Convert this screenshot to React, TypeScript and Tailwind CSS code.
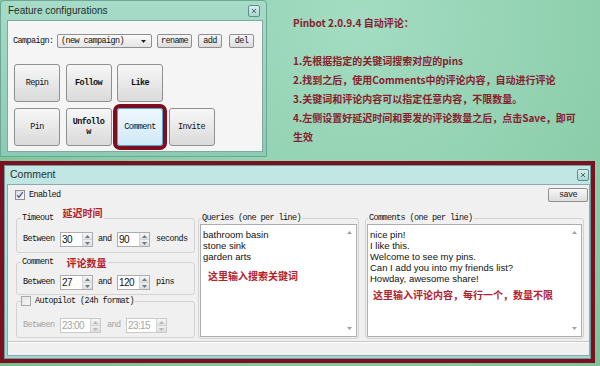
import clsx from 'clsx';

const mono = "font-['Liberation_Mono',monospace] text-[8.5px] tracking-[-0.6px]";
const sans = "font-['Liberation_Sans',Arial,sans-serif]";
const cjk = "font-['Noto_Sans_CJK_SC',sans-serif]";

function CloseBox() {
  return (
    <div className="flex h-[12px] w-[12px] items-center justify-center rounded-[2px] border border-[#5f8f8a] bg-linear-to-b from-[#d8efec] to-[#a9d6d1]">
      <svg width="6" height="6" viewBox="0 0 6 6">
        <path d="M1 1L5 5M5 1L1 5" stroke="#4d6b68" strokeWidth="1" />
      </svg>
    </div>
  );
}

function Btn({ label, bold, active }: { label: string; bold?: boolean; active?: boolean }) {
  return (
    <div
      className={clsx(
        mono,
        'flex h-[38px] w-[46px] items-center justify-center rounded-[3px] border px-[5px] text-center leading-[10px] break-all text-[#111]',
        active
          ? 'border-[#5b9fcf] bg-linear-to-b from-[#eef8fd] to-[#cfe9f7] outline-4 outline-solid outline-[#7b0f1f]'
          : 'border-[#8e8f8f] bg-linear-to-b from-[#f7f7f7] to-[#dadada]',
        bold && 'font-bold',
      )}
    >
      {label}
    </div>
  );
}

function SmallBtn({ label, w }: { label: string; w: string }) {
  return (
    <div
      className={clsx(
        mono,
        w,
        'flex h-[14px] items-center justify-center rounded-[2px] border border-[#8e8f8f] bg-linear-to-b from-[#f7f7f7] to-[#dcdcdc] text-[#111]',
      )}
    >
      {label}
    </div>
  );
}

function Check({ checked, disabled }: { checked?: boolean; disabled?: boolean }) {
  return (
    <span
      className={clsx(
        'flex h-[10px] w-[10px] shrink-0 items-center justify-center border bg-linear-to-br',
        disabled ? 'border-[#a8a8a8] from-[#e4e4e4] to-[#f6f6f6]' : 'border-[#8e8f8f] from-[#d9d9d9] to-white',
      )}
    >
      {checked && (
        <svg width="8" height="8" viewBox="0 0 8 8">
          <path d="M1.2 4.3L3 6.3L6.8 1.2" stroke="#3e5a94" strokeWidth="1.3" fill="none" />
        </svg>
      )}
    </span>
  );
}

function Spin({ value, w, disabled }: { value: string; w: string; disabled?: boolean }) {
  const arrow = disabled ? '#b8b8b8' : '#6d7a86';
  return (
    <div
      className={clsx(
        'flex h-[15px] shrink-0 border bg-white',
        w,
        disabled ? 'border-[#c9c9c9] text-[#a5a5a5]' : 'border-[#abadb3] text-[#111]',
      )}
    >
      <span className={clsx(sans, 'flex-1 pl-[1px] text-[10px] leading-[13px]')}>{value}</span>
      <div className="flex w-[10px] flex-col border-l border-[#d2d4d8]">
        <div className="flex flex-1 items-center justify-center border-b border-[#d2d4d8] bg-linear-to-b from-[#f6f6f6] to-[#e2e2e2]">
          <svg width="5" height="3" viewBox="0 0 5 3">
            <path d="M0 3L2.5 0L5 3Z" fill={arrow} />
          </svg>
        </div>
        <div className="flex flex-1 items-center justify-center bg-linear-to-b from-[#f0f0f0] to-[#dcdcdc]">
          <svg width="5" height="3" viewBox="0 0 5 3">
            <path d="M0 0L2.5 3L5 0Z" fill={arrow} />
          </svg>
        </div>
      </div>
    </div>
  );
}

function TextBox({ lines, note, noteClass }: { lines: string[]; note: string; noteClass: string }) {
  return (
    <div className="flex h-[113px] border border-[#abadb3] bg-white">
      <div className="flex-1 pt-[4px] pl-[2px]">
        {lines.map((l) => (
          <div key={l} className={clsx(sans, 'text-[9.5px] leading-[11px] whitespace-nowrap text-[#111]')}>
            {l}
          </div>
        ))}
        <div className={clsx(cjk, 'text-[10px] leading-[14px] font-semibold text-[#b3212d]', noteClass)}>{note}</div>
      </div>
      <div className="flex w-[13px] flex-col items-center justify-between py-[6px]">
        <svg width="5" height="3" viewBox="0 0 5 3">
          <path d="M0 3L2.5 0L5 3Z" fill="#9aa0a6" />
        </svg>
        <svg width="5" height="3" viewBox="0 0 5 3">
          <path d="M0 0L2.5 3L5 0Z" fill="#9aa0a6" />
        </svg>
      </div>
    </div>
  );
}

function FeatureWindow() {
  return (
    <div className="flex h-[157px] w-[267px] shrink-0 flex-col rounded-t-[4px] border border-[#6ea695] bg-linear-to-b from-[#a6dbc7] to-[#8ccab4]">
      <div className="flex h-[19px] items-center justify-between pr-[6px] pl-[7px]">
        <span className={clsx(sans, 'text-[10px] text-[#1f2f2b]')}>Feature configurations</span>
        <CloseBox />
      </div>
      <div className="mr-[3px] mb-[4px] ml-[6px] flex-1 border border-[#7fa99d] bg-[#f5f5f5] pt-[13px] pl-[5px]">
        <div className="flex h-[14px] items-center">
          <span className={clsx(mono, 'w-[44px] text-[#111]')}>Campaign:</span>
          <div className="flex h-[14px] w-[95px] items-center justify-between rounded-[2px] border border-[#8e8f8f] bg-linear-to-b from-[#fbfbfb] to-[#e4e4e4] pr-[5px] pl-[3px]">
            <span className={clsx(mono, 'text-[#111]')}>(new campaign)</span>
            <svg width="5" height="3" viewBox="0 0 5 3">
              <path d="M0 0L2.5 3L5 0Z" fill="#222" />
            </svg>
          </div>
          <div className="ml-[5px]">
            <SmallBtn label="rename" w="w-[35px]" />
          </div>
          <div className="ml-[6px]">
            <SmallBtn label="add" w="w-[24px]" />
          </div>
          <div className="ml-[7px]">
            <SmallBtn label="del" w="w-[25px]" />
          </div>
        </div>
        <div className="mt-[16px] ml-[1px] grid grid-cols-[repeat(4,46px)] gap-x-[5.5px] gap-y-[6px]">
          <Btn label="Repin" />
          <Btn label="Follow" bold />
          <Btn label="Like" bold />
          <div />
          <Btn label="Pin" />
          <Btn label="Unfollow" bold />
          <Btn label="Comment" active />
          <Btn label="Invite" />
        </div>
      </div>
    </div>
  );
}

function Notes() {
  const lines = [
    '1.先根据指定的关键词搜索对应的pins',
    '2.找到之后，使用Comments中的评论内容，自动进行评论',
    '3.关键词和评论内容可以指定任意内容，不限数量。',
    '4.左侧设置好延迟时间和要发的评论数量之后，点击Save，即可生效',
  ];
  return (
    <div className={clsx(cjk, 'w-[318px] pt-[13px] pl-[26px] text-[10px] leading-[19px] font-bold text-[#87202f]')}>
      <p>Pinbot 2.0.9.4 自动评论：</p>
      <p className="h-[19px]" />
      {lines.map((l) => (
        <p key={l} className="w-[284px]">
          {l}
        </p>
      ))}
    </div>
  );
}

function CommentWindow() {
  return (
    <div className="mt-[4px] h-[202px] w-[595px] border-4 border-[#7c0f20]">
      <div className="flex h-full flex-col border border-[#6e9e9b] bg-linear-to-b from-[#c3e7e5] to-[#a4d5d2]">
        <div className="flex h-[18px] items-center justify-between pr-[1px] pl-[5px]">
          <span className={clsx(sans, 'text-[10.5px] text-[#1d3533]')}>Comment</span>
          <CloseBox />
        </div>
        <div className="mb-[2px] ml-[2px] flex flex-1 flex-col border border-[#8eaaa8] bg-[#f0f0f0]">
          <div className="mt-[3px] flex h-[14px] items-center justify-between pr-[1px] pl-[7px]">
            <div className="flex items-center gap-[4px]">
              <Check checked />
              <span className={clsx(mono, 'text-[#111]')}>Enabled</span>
            </div>
            <SmallBtn label="save" w="w-[40px]" />
          </div>
          <div className="mt-[11px] ml-[8px] flex">
            <div className="flex w-[179px] flex-col">
              <fieldset className="rounded-[3px] border border-[#d3d3d3] px-[4px] pt-[9px] pb-[5px]">
                <legend className="flex h-[10px] items-center px-[1px]">
                  <span className={clsx(mono, 'text-[#111]')}>Timeout</span>
                  <span className={clsx(cjk, 'relative -top-[5px] ml-[9px] text-[10px] leading-[10px] font-semibold text-[#b3212d]')}>
                    延迟时间
                  </span>
                </legend>
                <div className={clsx(mono, 'flex items-center pl-[2px] text-[#111]')}>
                  <span className="w-[37px]">Between</span>
                  <Spin value="30" w="w-[33px]" />
                  <span className="ml-[5px] w-[19px]">and</span>
                  <Spin value="90" w="w-[33px]" />
                  <span className="ml-[6px]">seconds</span>
                </div>
              </fieldset>
              <fieldset className="mt-[4px] rounded-[3px] border border-[#d3d3d3] px-[4px] pt-[8px] pb-[4px]">
                <legend className="flex h-[10px] items-center px-[1px]">
                  <span className={clsx(mono, 'text-[#111]')}>Comment</span>
                  <span className={clsx(cjk, 'relative top-[1px] ml-[13px] text-[10px] leading-[10px] font-semibold text-[#b3212d]')}>
                    评论数量
                  </span>
                </legend>
                <div className={clsx(mono, 'flex items-center pl-[2px] text-[#111]')}>
                  <span className="w-[37px]">Between</span>
                  <Spin value="27" w="w-[33px]" />
                  <span className="ml-[5px] w-[19px]">and</span>
                  <Spin value="120" w="w-[33px]" />
                  <span className="ml-[6px]">pins</span>
                </div>
              </fieldset>
              <fieldset className="mt-[1px] rounded-[3px] border border-[#d3d3d3] px-[4px] pt-[12px] pb-[4px]">
                <legend className="flex h-[10px] items-center gap-[4px] pr-[1px]">
                  <Check disabled />
                  <span className={clsx(mono, 'text-[#111]')}>Autopilot (24h format)</span>
                </legend>
                <div className={clsx(mono, 'flex items-center pl-[2px] text-[#a3a3a3]')}>
                  <span className="w-[37px]">Between</span>
                  <Spin value="23:00" w="w-[41px]" disabled />
                  <span className="ml-[6px] w-[19px]">and</span>
                  <Spin value="23:15" w="w-[41px]" disabled />
                </div>
              </fieldset>
            </div>
            <fieldset className="ml-[3px] w-[161px] rounded-[3px] border border-[#d3d3d3] px-[1px] pt-[1px] pb-[1px]">
              <legend className="ml-[1px] flex h-[10px] items-center px-[1px]">
                <span className={clsx(mono, 'text-[#111]')}>Queries (one per line)</span>
              </legend>
              <TextBox
                lines={['bathroom basin', 'stone sink', 'garden arts']}
                note="这里输入搜索关键词"
                noteClass="mt-[7px] ml-[5px]"
              />
            </fieldset>
            <fieldset className="ml-[6px] w-[219px] rounded-[3px] border border-[#d3d3d3] px-[1px] pt-[1px] pb-[1px]">
              <legend className="ml-[1px] flex h-[10px] items-center px-[1px]">
                <span className={clsx(mono, 'text-[#111]')}>Comments (one per line)</span>
              </legend>
              <TextBox
                lines={[
                  'nice pin!',
                  'I like this.',
                  'Welcome to see my pins.',
                  'Can I add you into my friends list?',
                  'Howday, awesome share!',
                ]}
                note="这里输入评论内容，每行一个，数量不限"
                noteClass="mt-[4px] ml-[3px]"
              />
            </fieldset>
          </div>
          <div className="mt-auto h-[14px] border-t border-[#c6c6c6] bg-[#f0f0f0] shadow-[inset_0_1px_0_#ffffff]" />
        </div>
      </div>
    </div>
  );
}

export default function App() {
  return (
    <div className="flex h-[366px] w-[600px] flex-col overflow-hidden bg-[radial-gradient(ellipse_at_60%_5%,#a3dcc2_0%,#8fd0ae_45%,#76bf93_100%)]">
      <div className="flex h-[157px]">
        <FeatureWindow />
        <Notes />
      </div>
      <CommentWindow />
    </div>
  );
}
